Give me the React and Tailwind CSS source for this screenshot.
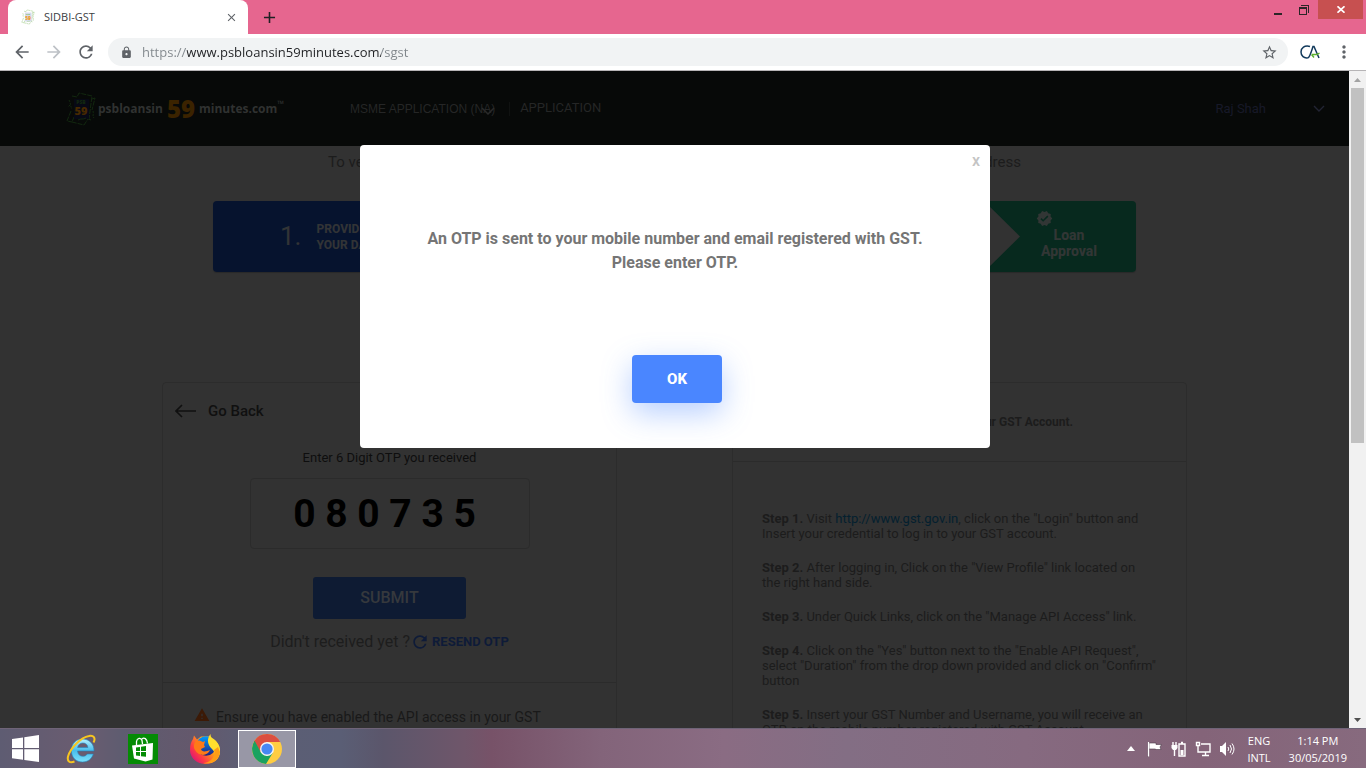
import React from "react";
import {
  MdArrowBack, MdArrowForward, MdRefresh, MdLock, MdStarBorder, MdMoreVert,
  MdClose, MdAdd, MdVerified, MdWarning,
} from "react-icons/md";

function BankIcon({ className, green, orange, blue }) {
  return (
    <svg viewBox="0 0 30 36" className={className} fill="none" aria-hidden="true">
      <path d="M6 5l5 1 2-4 13 3-3 23M25 29l-3-1-4 6-12-3 2-5M26 8l3-1-3 12M5 20L1 30l5 1" stroke={green} strokeWidth="1" strokeDasharray="5 1" />
      <path d="M3 9c2 3 1 6 3 9M4 14l-2 2M27 20c1 3-1 5 1 7" stroke={green} strokeWidth="1" strokeDasharray="2 1" />
      <rect x="8" y="8" width="15" height="20" fill={blue} />
      <text x="15" y="13" fontSize="5" fontWeight="800" textAnchor="middle" fill={green} fontFamily="Open Sans, sans-serif">PSB</text>
      <text x="15" y="24" fontSize="11" fontWeight="800" textAnchor="middle" fill={orange} fontFamily="Open Sans, sans-serif">59</text>
      <path d="M12 29c3-2 5 0 8-2" stroke={green} />
    </svg>
  );
}

function TabStrip() {
  return (
    <div className="flex h-[34px] shrink-0 items-start bg-[#e6668f]">
      <div className="ml-2 flex h-[34px] w-60 items-center rounded-t-lg bg-white pl-3 pr-2.5">
        <BankIcon className="h-4 w-4" green="#8cbf6c" orange="#f39a1e" blue="#d5dcec" />
        <span className="ml-2 grow text-[11px] text-[#3c4043]">SIDBI-GST</span>
        <button aria-label="Close tab" className="text-[#5f6368]"><MdClose size={13} /></button>
      </div>
      <button aria-label="New tab" className="ml-3 mt-2 text-[#202124]"><MdAdd size={19} /></button>
      <div className="ml-auto mr-[3px] flex">
        <button aria-label="Minimize" className="flex h-[19px] w-6 items-center justify-center">
          <svg viewBox="0 0 8 2" className="mt-2 h-0.5 w-2"><path d="M0 0h8v2H0z" fill="#2b2527" /></svg>
        </button>
        <button aria-label="Restore" className="flex h-[19px] w-7 items-center justify-center">
          <svg viewBox="0 0 10 10" className="h-2.5 w-2.5" fill="none" stroke="#2b2527" shapeRendering="crispEdges">
            <path d="M.5 2.5h7v7h-7zM0 3h8M2 .5h7.5V8" />
          </svg>
        </button>
        <button aria-label="Close window" className="flex h-[19px] w-[45px] items-center justify-center bg-[#c75050]">
          <svg viewBox="0 0 8 7" className="h-[7px] w-2"><path d="M.5.3l7 6.4M7.5.3l-7 6.4" stroke="#fff" strokeWidth="1.7" /></svg>
        </button>
      </div>
    </div>
  );
}

function Toolbar() {
  return (
    <div className="flex h-[37px] shrink-0 items-center border-b border-[#b6b4b6] bg-white px-3 text-[#5f6368]">
      <button aria-label="Back"><MdArrowBack size={20} /></button>
      <button aria-label="Forward" className="ml-3 text-[#bdc1c6]"><MdArrowForward size={20} /></button>
      <button aria-label="Reload" className="ml-3"><MdRefresh size={20} /></button>
      <div className="ml-3 flex h-7 grow items-center rounded-full bg-[#f1f3f4] pl-3 pr-2.5">
        <MdLock size={13} />
        <input
          aria-label="Address"
          defaultValue="https://www.psbloansin59minutes.com/sgst"
          className="ml-[9px] min-w-0 grow bg-[linear-gradient(90deg,#80868b_45px,#202124_45px,#202124_239px,#80868b_239px)] bg-clip-text pt-0.5 text-[13px] text-transparent outline-none"
        />
        <button aria-label="Bookmark"><MdStarBorder size={17} /></button>
      </div>
      <button aria-label="CA extension" className="ml-3">
        <svg viewBox="0 0 20 20" className="h-5 w-5" fill="none">
          <path d="M10 4.500C4.500 3 1 6 1 10s3 6.500 7 5.800c2-.8 4-8.500 5-11.300h1l5 11.500" stroke="#123a5c" strokeWidth="1.500" />
          <path d="M11.500 12.500l2.500 3M12 12.500h5l2.500-1.500" stroke="#5cb030" strokeWidth="1.400" />
        </svg>
      </button>
      <button aria-label="Menu" className="ml-3.5"><MdMoreVert size={20} /></button>
    </div>
  );
}

function SiteHeader() {
  return (
    <header className="flex h-[75px] shrink-0 items-center bg-[#070908] pl-[66px] pr-6 text-[13px] text-[#252626]">
      <a href="#home" className="flex w-[222px] items-center font-['Open_Sans',sans-serif] text-xs font-bold text-[#303231]">
        <BankIcon className="h-9 w-[30px] shrink-0" green="#12280f" orange="#472900" blue="#070915" />
        <span className="ml-0.5">psbloansin</span>
        <span className="ml-1 text-[24px] leading-8 font-extrabold text-[#3b2300]">59</span>
        <span className="ml-1">minutes.com</span>
        <sup className="text-[9px]">™</sup>
      </a>
      <nav className="ml-[62px] flex items-center">
        <a href="#msme" className="relative font-['Liberation_Sans',sans-serif] text-xs">
          MSME APPLICATION (NA)
          <svg viewBox="0 0 14 8" className="absolute right-0 top-1.5 h-2 w-3.5" fill="none"><path d="M1 1l6 6 6-6" stroke="#292a2a" strokeWidth="1.500" /></svg>
        </a>
        <span className="ml-3.5 h-3.5 w-px bg-[#101211]" />
        <a href="#application" className="ml-2.5 pb-px">APPLICATION</a>
      </nav>
      <button className="ml-auto flex items-center text-[#171928]">
        Raj Shah
        <svg viewBox="0 0 12 8" className="ml-[47px] h-2 w-3" fill="none"><path d="M1 1l5 5 5-5" stroke="#222433" strokeWidth="1.400" /></svg>
      </button>
    </header>
  );
}

function Stepper() {
  return (
    <div className="mx-auto mt-[26px] flex h-[71px] w-full max-w-[923px] overflow-hidden rounded bg-[#323232] shadow-[0_1px_1px_rgba(0,0,0,0.2)]">
      <div className="flex w-[300px] items-center bg-[#06132e] pl-[67px] text-[#323436]">
        <span className="text-[26px]">1.</span>
        <span className="ml-[15px] text-xs leading-4 font-extrabold">PROVIDE<br />YOUR DATA</span>
      </div>
      <div className="grow bg-[#06132e]" />
      <svg viewBox="0 0 36 71" className="h-[71px] w-9 bg-[#07291e]"><path d="M0 0l36 35.500L0 71z" fill="#323232" /></svg>
      <div className="flex w-[116px] flex-col bg-[#07291e] pr-[18px] pt-[9px] text-[#323635]">
        <MdVerified size={17} className="ml-4" />
        <span className="text-center text-sm leading-4 font-extrabold">Loan<br />Approval</span>
      </div>
    </div>
  );
}

function OtpCard() {
  return (
    <section className="w-[455px] rounded border border-[#2c2c2c]">
      <button className="ml-3 mt-4 flex h-6 items-center font-medium text-[15px] text-[#101010]">
        <svg viewBox="0 0 21 14" className="mr-3 h-3.5 w-[21px]" fill="none"><path d="M7 1L1 7l6 6M1 7h20" stroke="#101010" strokeWidth="1.600" /></svg>
        Go Back
      </button>
      <div className="flex flex-col items-center">
        <label htmlFor="otp" className="mt-[25px] text-[13px] leading-5 text-[#0e0e0e]">Enter 6 Digit OTP you received</label>
        <input
          id="otp"
          defaultValue="0 8 0 7 3 5"
          className="mt-2.5 h-[71px] w-[280px] rounded border border-[#2b2b2b] bg-transparent pr-2.5 text-center text-[39px] font-bold text-black outline-none"
        />
        <button className="mt-7 h-[42px] w-[153px] rounded-[3px] bg-[#0e1b33] text-base font-medium text-[#36393d]">SUBMIT</button>
        <p className="mt-[11px] flex items-center text-base text-[#1d1d1d]">
          Didn't received yet ?
          <button className="flex items-center text-[13px] font-bold text-[#0e1b38]">
            <MdRefresh size={20} className="mr-0.5" />RESEND OTP
          </button>
        </p>
      </div>
      <div className="mt-7 flex items-center border-t border-[#2b2b2b] pl-[31px] pt-6 text-sm text-[#191919]">
        <MdWarning size={16} className="mr-1.5 mb-1 text-[#3c1a06]" />
        Ensure you have enabled the API access in your GST
      </div>
    </section>
  );
}

const STEPS = [
  ["Step 1.", <>Visit <a href="http://www.gst.gov.in" className="text-[#04202f]">http://www.gst.gov.in</a>, click on the "Login" button and<br />Insert your credential to log in to your GST account.</>],
  ["Step 2.", <>After logging in, Click on the "View Profile" link located on<br />the right hand side.</>],
  ["Step 3.", <>Under Quick Links, click on the "Manage API Access" link.</>],
  ["Step 4.", <>Click on the "Yes" button next to the "Enable API Request",<br />select "Duration" from the drop down provided and click on "Confirm"<br />button</>],
  ["Step 5.", <>Insert your GST Number and Username, you will receive an<br />OTP on the mobile number registered with GST Account.</>],
];

function StepsCard() {
  return (
    <section className="w-[455px] rounded border border-[#2c2c2c] text-[#1c1c1c]">
      <h2 className="flex h-[79px] items-center justify-end border-b border-[#2b2b2b] pr-[113px] text-xs font-bold">
        Steps to enable API access in your GST Account.
      </h2>
      <div className="flex flex-col gap-[19px] whitespace-nowrap pl-[29px] pt-[49px] text-[13px] leading-[15px]">
        {STEPS.map(([name, body]) => (
          <p key={name}><b>{name}</b> {body}</p>
        ))}
      </div>
    </section>
  );
}

function OtpDialog() {
  return (
    <div className="absolute inset-x-0 top-[74px] flex justify-center pl-px">
      <div role="dialog" aria-label="OTP sent" className="relative flex w-[630px] flex-col items-center rounded bg-white pb-[45px] pt-[82px]">
        <button aria-label="Close" className="absolute right-2.5 top-1 text-base font-medium leading-6 text-[#c4c4c4]">x</button>
        <p className="text-center text-base font-bold text-[#757575]">
          An OTP is sent to your mobile number and email registered with GST.<br />Please enter OTP.
        </p>
        <button className="ml-1 mt-20 h-12 w-[90px] rounded bg-[#4a86ff] text-[15px] font-extrabold text-white shadow-[0_10px_30px_rgba(74,134,255,0.4)]">OK</button>
      </div>
    </div>
  );
}

function Scrollbar() {
  return (
    <div className="flex w-[17px] shrink-0 flex-col items-center bg-[#f1f1f1]">
      <svg viewBox="0 0 17 17" className="h-[17px] w-[17px]"><path d="M5 11l3.500-4 3.500 4z" fill="#a3a3a3" /></svg>
      <div className="h-[54%] w-[13px] bg-[#c1c1c1]" />
      <svg viewBox="0 0 17 17" className="mt-auto h-[17px] w-[17px]"><path d="M5 7h7l-3.500 4z" fill="#505050" /></svg>
    </div>
  );
}

function WindowsLogo() {
  return (
    <svg viewBox="0 0 27 27" className="h-[27px] w-[27px]" fill="#fff">
      <path d="M0 4l11-1.600V13H0zM12.300 2.200L27 0v13H12.300zM0 14.200h11v10.600L0 23.200zM12.300 14.200H27V27l-14.700-2.100z" />
    </svg>
  );
}

function IeLogo() {
  return (
    <svg viewBox="0 0 30 30" className="h-[30px] w-[30px]" fill="none">
      <defs><linearGradient id="ie" x2="0" y2="1"><stop stopColor="#b8f1ff" /><stop offset=".5" stopColor="#48bdec" /><stop offset="1" stopColor="#7be0fb" /></linearGradient></defs>
      <path d="M28 17H11.500c.3 3.600 2.600 5.300 5.300 5.300 2 0 3.500-.8 4.500-2.300h6c-1.600 5-5.500 8-10.800 8C10 28 5.400 23.500 5.400 16.500 5.400 9.500 10 5 16.500 5S28.300 9.800 28 17zM11.600 13.500h10.300c-.3-2.800-2.300-4.500-5-4.500s-4.800 1.700-5.300 4.500z" fill="url(#ie)" stroke="#2384bd" strokeWidth=".6" />
      <path d="M27.500 8.500C30 4 27.500 1 23 2 15 3.500 4.500 13.500 2 22.500 1 27 3.500 29.500 8.500 27.500" stroke="#f7c520" strokeWidth="2" />
    </svg>
  );
}

function StoreLogo() {
  return (
    <svg viewBox="0 0 30 30" className="h-[30px] w-[30px]">
      <path d="M0 0h30v30H0z" fill="#048b04" />
      <path d="M8.500 11V7.500C9 4 13 3 14 6.500L14.500 10M14 5c2-2 5-.5 5.500 4.500" fill="none" stroke="#fff" strokeWidth="1.300" />
      <path d="M4 11.500l21-2.500-.5 16.500-7 2L6 24.500z" fill="#fff" />
      <path d="M8 13.500l4-.6V17H8zM13 12.800l5-.7V17h-5zM8 18h4v4l-4-.5zM13 18h5v4.800l-5-.6z" fill="#048b04" />
    </svg>
  );
}

function FirefoxLogo() {
  return (
    <svg viewBox="0 0 30 30" className="h-[30px] w-[30px]">
      <defs>
        <linearGradient id="ff" x1="1" y1="0" x2="0" y2=".8"><stop stopColor="#fff04a" /><stop offset=".45" stopColor="#ff9a1a" /><stop offset=".75" stopColor="#ff3a44" /><stop offset="1" stopColor="#d9107c" /></linearGradient>
        <linearGradient id="fb" x2="0" y2="1"><stop stopColor="#009dff" /><stop offset="1" stopColor="#20207e" /></linearGradient>
      </defs>
      <path d="M3 5L4 1.500 7 5.500 11 2.500h8C25 5 30 10 30 17c0 8-6 13-14.500 13S0 24 0 16C0 11 1 8 3 5z" fill="url(#ff)" />
      <circle cx="16" cy="12" r="9.800" fill="url(#fb)" />
      <path d="M6 7c3-1 5 0 7 1l2-1-1 4 1 2-4 2c1 4 6 2 9 1-2 6-11 7-15 0-2-3-1-7 1-9z" fill="#ff7a18" />
      <path d="M20.500 0c0 3 1 4 3 5 4 3 7 7 6.500 13-1 6-5 10-10 11 5-5 7-9 2-14-4-4-6-9-1.500-15z" fill="#ffdf2e" />
      <path d="M24 16c2 7-4 13-11 13 8 2 16-2 17-11l-2-5z" fill="#ff9d16" />
    </svg>
  );
}

function ChromeLogo() {
  return (
    <svg viewBox="0 0 30 30" className="h-[30px] w-[30px]">
      <circle cx="15" cy="15" r="15" fill="#ffcd42" />
      <path d="M2 7.500A15 15 0 0 1 28.200 8H15L9 18.500z" fill="#db4f40" />
      <path d="M2.600 6.700A15 15 0 0 0 14 30l7-11.500-6 3.500-6-3.500z" fill="#1aa260" />
      <circle cx="15" cy="15" r="7" fill="#f4f4f4" />
      <circle cx="15" cy="15" r="5.600" fill="#4688f4" />
    </svg>
  );
}

function Tray() {
  return (
    <div className="ml-auto flex items-center gap-2 pr-[19px] text-white">
      <button aria-label="Show hidden icons"><svg viewBox="0 0 8 5" className="mr-1 h-[5px] w-2"><path d="M0 5l4-5 4 5z" fill="#fff" /></svg></button>
      <svg viewBox="0 0 16 16" className="h-4 w-4"><path d="M1 1v15M2 2h7v1.500h5.500L13 6l1 2.500H8.500V8H2z" fill="#fff" stroke="#4a3a48" strokeWidth=".6" /><path d="M1.500 1v14.500" stroke="#fff" strokeWidth="1.300" /></svg>
      <svg viewBox="0 0 16 16" className="h-4 w-4" fill="none" stroke="#fff" strokeWidth="1.400"><path d="M2 1v3M5 1v3M3.500 8v7M8 3h6v12H8zM10 1.500h2" /><path d="M.5 4h6v3l-1.500 2H2L.5 7z" fill="#fff" stroke="none" /><path d="M9.500 9h3v5h-3z" fill="#fff" stroke="none" /></svg>
      <svg viewBox="0 0 16 16" className="h-4 w-4" fill="none" stroke="#fff" strokeWidth="1.400"><path d="M6 3h9v8H6M10.500 11v3M7 14.500h7M3 5v6h3M1.500 1.500h3v3h-3z" /></svg>
      <svg viewBox="0 0 16 16" className="h-4 w-4" fill="none"><path d="M1 5h2l4-4v14l-4-4H1z" fill="#fff" /><path d="M9 6q1.500 2 0 4M11 4q3 4 0 8M13 2.500q4 5.500 0 11" stroke="#fff" /></svg>
      <div className="ml-1 text-center text-[11px] leading-[17px]">ENG<br />INTL</div>
      <div className="ml-2.5 text-center text-[11px] leading-[17px]">1:14 PM<br />30/05/2019</div>
    </div>
  );
}

function Taskbar() {
  return (
    <footer className="flex h-10 shrink-0 items-center border-t border-[#6f6478] bg-[linear-gradient(90deg,#5e5c72_0%,#6a5c70_6%,#5e5c70_9%,#64586c_14%,#5c5e74_18%,#5a5e75_25%,#5b566b_28%,#6f566a_34%,#775268_36%,#83647a_44%,#8a6c83_53%,#836e84_62%,#866a80_75%,#846479_88%,#876a7e_100%)]">
      <button aria-label="Start" className="ml-3"><WindowsLogo /></button>
      <button aria-label="Internet Explorer" className="ml-[27px]"><IeLogo /></button>
      <button aria-label="Store" className="ml-8"><StoreLogo /></button>
      <button aria-label="Firefox" className="ml-8"><FirefoxLogo /></button>
      <button aria-label="Chrome" className="ml-[18px] flex h-[38px] w-[58px] items-center justify-center border border-white bg-[#9897a6]"><ChromeLogo /></button>
      <Tray />
    </footer>
  );
}

export default function App() {
  return (
    <div className="flex h-screen w-full flex-col overflow-hidden bg-white font-['Open_Sans',sans-serif]">
      <TabStrip />
      <Toolbar />
      <div className="flex min-h-0 grow font-['Roboto',sans-serif]">
        <div className="relative flex min-w-0 grow flex-col overflow-hidden bg-[#323232]">
          <SiteHeader />
          <main className="pt-[5px]">
            <p className="mx-auto flex h-6 w-full max-w-[693px] justify-between text-[15px] text-[#1c1c1c]">
              <span>To verify your GST details</span>
              <span>and email address</span>
            </p>
            <Stepper />
            <div className="mx-auto mt-[110px] flex w-full max-w-[1025px] justify-between">
              <OtpCard />
              <StepsCard />
            </div>
          </main>
          <OtpDialog />
        </div>
        <Scrollbar />
      </div>
      <Taskbar />
    </div>
  );
}
